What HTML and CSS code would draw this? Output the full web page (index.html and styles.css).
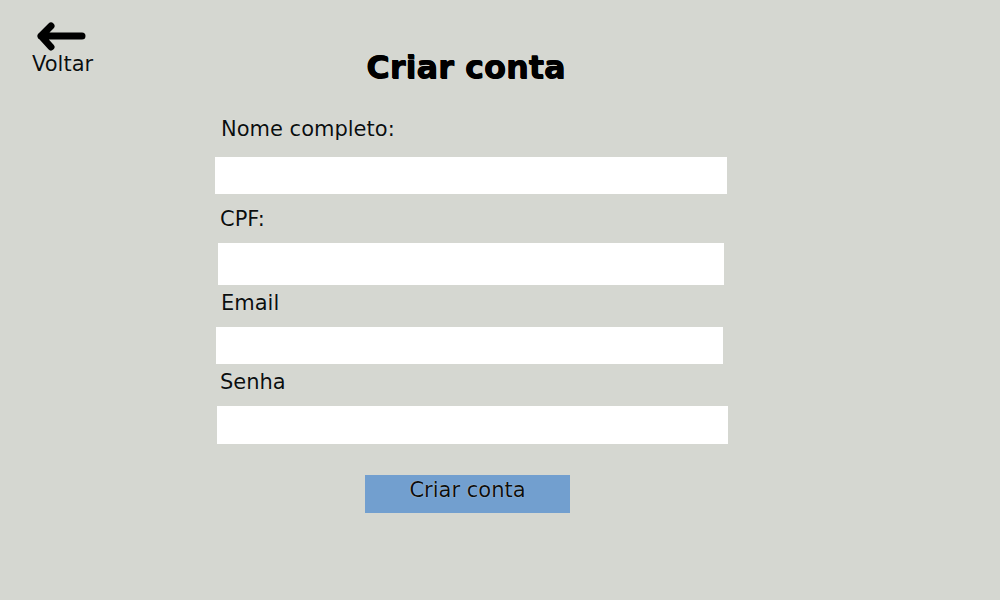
FILE: index.html
```html
<!DOCTYPE html>
<html lang="pt-BR">
<head>
<meta charset="utf-8">
<title>Criar conta</title>
<link rel="stylesheet" href="styles.css">
</head>
<body>
<div class="app">
  <aside class="side">
    <a class="back" href="#">
      <svg class="back-icon" width="52" height="30" viewBox="0 0 52 30">
        <path d="M7 15 H48 M7 15 L17 5 M7 15 L17 26" fill="none" stroke="#000" stroke-width="7" stroke-linecap="round" stroke-linejoin="round"/>
      </svg>
      <span class="back-label">Voltar</span>
    </a>
  </aside>
  <main class="form-col">
    <h1 class="title">Criar conta</h1>
    <form class="form">
      <label class="field field-name">
        <span class="label">Nome completo:</span>
        <input class="input input-name" type="text">
      </label>
      <label class="field field-cpf">
        <span class="label">CPF:</span>
        <input class="input input-cpf" type="text">
      </label>
      <label class="field field-email">
        <span class="label">Email</span>
        <input class="input input-email" type="email">
      </label>
      <label class="field field-pass">
        <span class="label">Senha</span>
        <input class="input input-pass" type="password">
      </label>
      <div class="actions">
        <button class="submit" type="button">Criar conta</button>
      </div>
    </form>
  </main>
</div>
</body>
</html>
```
FILE: styles.css
```css
html, body {
  margin: 0;
  padding: 0;
  height: 100%;
  background: #d5d7d1;
}

body {
  font-family: "DejaVu Sans", sans-serif;
  color: #0b0f0f;
}

.app {
  width: 1000px;
  height: 600px;
  box-sizing: border-box;
  background: #d5d7d1;
  display: flex;
  align-items: flex-start;
}

.side {
  width: 215px;
  flex: none;
}

.back {
  display: flex;
  flex-direction: column;
  align-items: flex-start;
  margin: 21px 0 0 32px;
  text-decoration: none;
  color: #0b0f0f;
}

.back-icon {
  display: block;
  margin-left: 2px;
}

.back-label {
  font-size: 21px;
  line-height: 24px;
  margin-top: 1px;
  text-shadow: 0 0 1px rgba(255, 255, 255, 0.7);
}

.form-col {
  width: 513px;
  flex: none;
  display: flex;
  flex-direction: column;
}

.title {
  margin: 49px 0 0;
  padding-right: 11px;
  text-align: center;
  font-size: 32px;
  line-height: 36px;
  font-weight: bold;
  color: #000;
  text-shadow: 0.5px 0.5px 0 #000, -0.3px 0 0 #000;
}

.form {
  display: flex;
  flex-direction: column;
}

.field {
  display: flex;
  flex-direction: column;
}

.label {
  font-size: 21px;
  line-height: 24px;
  padding-left: 6px;
  text-shadow: 0 0 1px rgba(255, 255, 255, 0.7);
}

.input {
  display: block;
  box-sizing: border-box;
  border: 0;
  margin: 0;
  padding: 0 8px;
  background: #fff;
  font: inherit;
  outline: none;
}

.field-name { margin-top: 32px; }
.field-name .input { margin-top: 16px; width: 512px; height: 37px; }

.field-cpf { margin-top: 13px; }
.field-cpf .label { padding-left: 5px; }
.field-cpf .input { margin-top: 12px; margin-left: 3px; width: 506px; height: 42px; }

.field-email { margin-top: 6px; }
.field-email .input { margin-top: 12px; margin-left: 1px; width: 507px; height: 37px; }

.field-pass { margin-top: 6px; }
.field-pass .label { padding-left: 5px; }
.field-pass .input { margin-top: 12px; margin-left: 2px; width: 511px; height: 38px; }

.actions {
  margin-top: 31px;
  display: flex;
  padding-left: 150px;
}

.submit {
  width: 205px;
  height: 38px;
  box-sizing: border-box;
  border: 0;
  margin: 0;
  padding: 3px 0 0;
  background: #729fcf;
  color: #0b0f0f;
  font-family: "DejaVu Sans", sans-serif;
  font-size: 21px;
  line-height: 24px;
  text-align: center;
  display: flex;
  justify-content: center;
  align-items: flex-start;
  text-shadow: 0 0 1px rgba(255, 255, 255, 0.8);
}
```
